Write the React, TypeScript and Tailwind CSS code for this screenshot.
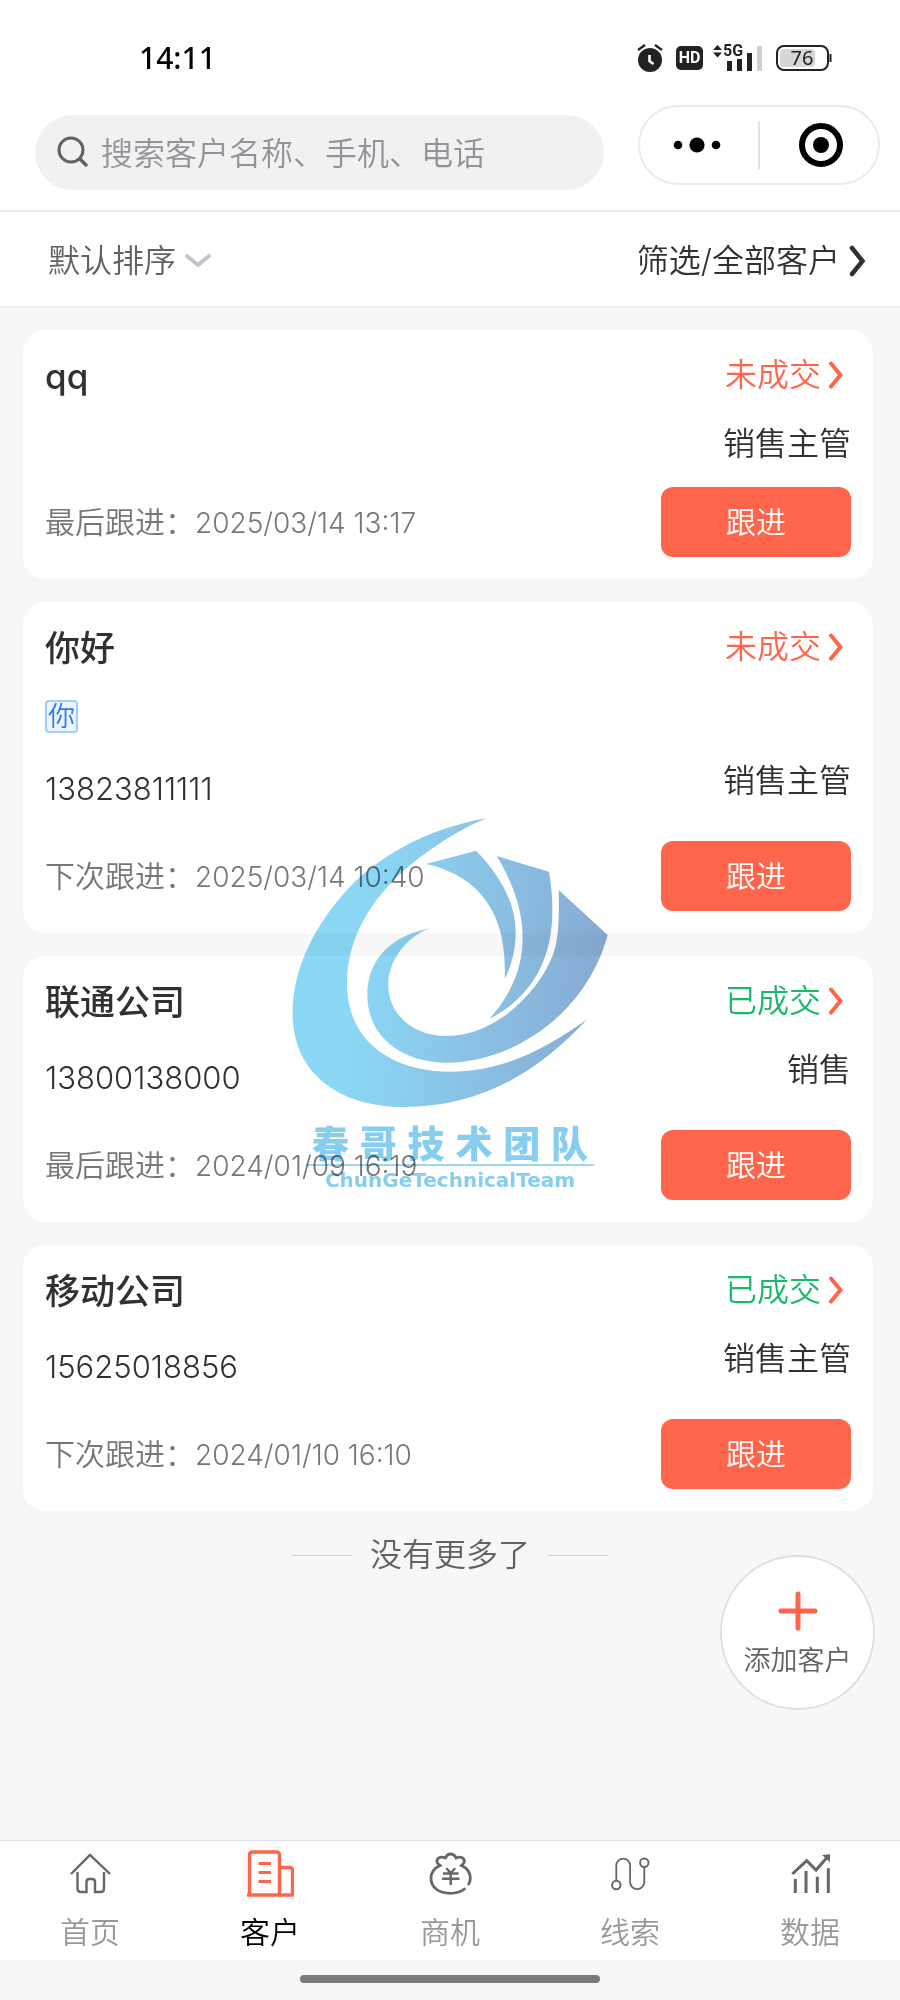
import { type ReactNode, useId, useState } from 'react'

type Customer = {
  name: string
  tag?: string
  phone?: string
  closed: boolean
  owner: string
  followLabel: string
  followTime: string
}

const customers: Customer[] = [
  {
    name: 'qq',
    closed: false,
    owner: '销售主管',
    followLabel: '最后跟进：',
    followTime: '2025/03/14 13:17',
  },
  {
    name: '你好',
    tag: '你',
    phone: '13823811111',
    closed: false,
    owner: '销售主管',
    followLabel: '下次跟进：',
    followTime: '2025/03/14 10:40',
  },
  {
    name: '联通公司',
    phone: '13800138000',
    closed: true,
    owner: '销售',
    followLabel: '最后跟进：',
    followTime: '2024/01/09 16:19',
  },
  {
    name: '移动公司',
    phone: '15625018856',
    closed: true,
    owner: '销售主管',
    followLabel: '下次跟进：',
    followTime: '2024/01/10 16:10',
  },
]

export default function App() {
  return (
    <div className="relative flex min-h-screen flex-col bg-[#f7f7f7] font-['Inter','Noto_Sans_CJK_SC',sans-serif] text-[32px] font-[350] text-[#303133]">
      <header className="border-b-2 border-[#ebebeb] bg-white">
        <StatusBar />
        <SearchRow />
      </header>
      <FilterBar />

      <main className="relative flex flex-1 flex-col pt-[22px]">
        <ul className="flex flex-col gap-[23px] pr-[27px] pl-[23px]">
          {customers.map((customer) => (
            <CustomerCard key={customer.name} customer={customer} />
          ))}
        </ul>
        <div className="mt-5 flex items-center justify-center gap-[18px] leading-[48px] text-[#606266]">
          <span className="h-px w-[60px] bg-[#d0d0d0]" />
          没有更多了
          <span className="h-px w-[60px] bg-[#d0d0d0]" />
        </div>
        <button
          type="button"
          className="absolute right-[25px] bottom-[130px] flex size-[155px] flex-col items-center justify-center gap-[10px] rounded-full border-2 border-[#dcdfe6] bg-white text-[27px] text-[#606266]"
        >
          <svg viewBox="0 0 40 40" className="mt-1.5 size-10" aria-hidden="true">
            <path d="M20 3v34M3 20h34" fill="none" stroke="#ff654a" strokeWidth="5" strokeLinecap="round" />
          </svg>
          <span className="leading-10">添加客户</span>
        </button>
      </main>

      <TabBar />
      <div className="flex h-10 items-center justify-center pb-0.5">
        <span className="h-2 w-[300px] rounded-full bg-[#7b7b7b]" />
      </div>

      <Watermark />
    </div>
  )
}

function StatusBar() {
  return (
    <div className="flex h-[105px] items-center justify-between pt-[10px] pr-[68px] pl-[139px]">
      <span className="font-['Noto_Sans',sans-serif] text-[30px] font-medium text-black">14:11</span>
      <div className="flex items-center">
        <svg viewBox="0 0 28 30" className="h-[30px] w-7" aria-label="闹钟">
          <circle cx="14" cy="17" r="12" fill="#222" />
          <path d="M2 7l7-5M26 7l-7-5" stroke="#222" strokeWidth="2.4" fill="none" />
          <path d="M13.5 12v6l4 3" stroke="#fff" strokeWidth="2.6" fill="none" />
        </svg>
        <span className="ml-3 flex h-6 w-[27px] items-center justify-center rounded-[5px] bg-[#222] font-['Roboto',sans-serif] text-[16px] font-bold text-white">
          HD
        </span>
        <svg viewBox="0 0 52 34" className="ml-[9px] h-[34px] w-[52px]" aria-label="5G 信号">
          <path d="M1 9l4.500-5 4.500 5zM1 11.500l4.500 5 4.500-5z" fill="#222" />
          <text x="11" y="15" fontFamily="Roboto, sans-serif" fontSize="16" fontWeight="700" fill="#222">
            5G
          </text>
          <path d="M15 20h5v10h-5zM25 18h5v12h-5zM35 12h5v18h-5z" fill="#222" />
          <path d="M45 5h5v25h-5z" fill="#d0d0d0" />
        </svg>
        <svg viewBox="0 0 56 26" className="ml-3 h-[26px] w-14" aria-label="电量 76">
          <rect x="1" y="1" width="51" height="24" rx="7" fill="#fff" stroke="#222" strokeWidth="2" />
          <rect x="4" y="4" width="35" height="18" rx="4" fill="#d6d6d6" />
          <path d="M54.500 9v8" stroke="#222" strokeWidth="2" />
          <text x="26" y="20" textAnchor="middle" fontFamily="Noto Sans, sans-serif" fontSize="20" fontWeight="400" fill="#222">
            76
          </text>
        </svg>
      </div>
    </div>
  )
}

function SearchRow() {
  const inputId = useId()
  const [keyword, setKeyword] = useState('')

  return (
    <div className="flex items-start gap-[34px] pr-5 pb-5 pl-[35px]">
      <form
        onSubmit={(e) => e.preventDefault()}
        className="mt-[10px] flex h-[75px] min-w-0 flex-1 items-center rounded-full bg-[#f1f1f1] pl-5"
      >
        <label htmlFor={inputId} aria-label="搜索客户">
          <svg viewBox="0 0 34 34" className="size-[34px]" aria-hidden="true">
            <circle cx="16" cy="14" r="12" fill="none" stroke="#606266" strokeWidth="3" />
            <path d="M25 23l6 6" stroke="#606266" strokeWidth="3.500" strokeLinecap="round" />
          </svg>
        </label>
        <input
          id={inputId}
          type="text"
          value={keyword}
          onChange={(e) => setKeyword(e.target.value)}
          placeholder="搜索客户名称、手机、电话"
          className="ml-3 min-w-0 flex-1 bg-transparent pt-0.5 placeholder:text-[#909399] focus:outline-none"
        />
      </form>
      <div className="flex h-20 w-[242px] items-center rounded-full border-2 border-[#ebebeb]">
        <button type="button" aria-label="更多" className="flex flex-1 justify-center pr-1">
          <svg viewBox="0 0 48 16" className="h-4 w-12" aria-hidden="true">
            <circle cx="5" cy="8" r="4.300" />
            <circle cx="24" cy="8" r="7.600" />
            <circle cx="43" cy="8" r="4.300" />
          </svg>
        </button>
        <span className="h-12 w-0.5 bg-[#e2e2e2]" />
        <button type="button" aria-label="关闭" className="flex flex-1 justify-center pl-1">
          <svg viewBox="0 0 44 44" className="size-11" aria-hidden="true">
            <circle cx="22" cy="22" r="19" fill="none" stroke="#000" strokeWidth="6" />
            <circle cx="22" cy="22" r="8" />
          </svg>
        </button>
      </div>
    </div>
  )
}

function FilterBar() {
  return (
    <div className="flex h-[96px] items-center justify-between border-b-2 border-[#ebecf0] bg-white pt-1 pr-[34px] pl-12">
      <button type="button" className="flex items-center gap-2 text-[#606266]">
        默认排序
        <svg viewBox="0 0 28 16" className="h-4 w-7" aria-hidden="true">
          <path d="M3 3l11 9 11-9" fill="none" stroke="#c0c4cc" strokeWidth="4" strokeLinecap="round" />
        </svg>
      </button>
      <button type="button" className="flex items-center gap-2">
        筛选/全部客户
        <svg viewBox="0 0 18 32" className="h-8 w-[18px]" aria-hidden="true">
          <path d="M4 3l10.500 13L4 29" fill="none" stroke="#303133" strokeWidth="4.500" strokeLinecap="round" />
        </svg>
      </button>
    </div>
  )
}

function CustomerCard({ customer }: { customer: Customer }) {
  const { name, tag, phone, closed, owner, followLabel, followTime } = customer

  return (
    <li className="rounded-[22px] bg-white px-[22px] pb-[22px]">
      <div className="flex h-[90px] items-center justify-between pt-0.5">
        <h2 className="text-[35px] font-medium">{name}</h2>
        <a
          href="#detail"
          className={`flex items-center gap-2 pr-2 pb-0.5 ${closed ? 'text-[#19b96b]' : 'text-[#ff654a]'}`}
        >
          {closed ? '已成交' : '未成交'}
          <svg viewBox="0 0 14 28" className="h-7 w-3.5" aria-hidden="true">
            <path d="M2 2.500L11.500 14 2 25.500" fill="none" stroke="#ff654a" strokeWidth="4" strokeLinecap="round" />
          </svg>
        </a>
      </div>
      {tag && (
        <div className="flex h-[65px] items-start pt-2">
          <span className="flex size-[33px] items-center justify-center rounded border-2 border-[#a0cfff] bg-[#ecf5ff] text-[27px] leading-none text-[#2b7bf3]">
            {tag}
          </span>
        </div>
      )}
      <div className="flex items-start justify-between leading-[48px]">
        {phone ? <span className="pt-2 pb-7 text-[31px]">{phone}</span> : <span />}
        <span className="pb-[19px]">{owner}</span>
      </div>
      <div className="flex items-center justify-between">
        <p className="text-[30px] text-[#777]">
          {followLabel}
          <span className="text-[28px]">{followTime}</span>
        </p>
        <button type="button" className="h-[70px] w-[190px] rounded-xl bg-[#ff654a] text-[30px] text-white">
          跟进
        </button>
      </div>
    </li>
  )
}

function TabBar() {
  return (
    <nav className="grid h-[120px] grid-cols-5 border-t border-[#e0e1ec] bg-white">
      <Tab label="首页">
        <path d="M5 25L24 6l20 19M11.500 23v16.500q0 3.500 3.500 3.500h5.500V33q0-3 3-3h2.500q3 0 3 3v10h5.500q3.500 0 3.500-3.500V23" strokeWidth="2.400" />
      </Tab>
      <Tab label="客户" active>
        <path d="M3.500 46V6q0-3 3-3h24q3 0 3 3v40M33.500 18.500h10q3 0 3 3V46M1 46h47" strokeWidth="3.400" />
        <path d="M12.500 14.500h12.500M12.500 23.500h12.500M12.500 32.500h12.500" strokeWidth="3.200" />
      </Tab>
      <Tab label="商机">
        <path
          d="M38.500 40C34.500 43 30 44.300 24.500 44.300 13 44.300 5 38.500 5 29.300 5 23 8.500 19 14 16.500 10.500 14 10 11.500 12 9.500 14 7.500 17 8 19.500 9 20.500 6.500 22 5 24.600 5S29 6.500 30 9C32.500 8 35.500 7.500 37.300 9.500 39.200 11.500 38.500 14 35.500 16.500 41 19 44.300 23.500 44.300 29.300Q44.300 32.500 42.700 35"
          strokeWidth="2.800"
          strokeLinecap="round"
        />
        <path d="M21 20l3.700 4 3.800-4M18 24.500h13.500M17 29.700h15.500M24.700 24v11" strokeWidth="2.500" strokeLinecap="round" />
      </Tab>
      <Tab label="线索">
        <circle cx="10.300" cy="36" r="4.200" strokeWidth="2" />
        <circle cx="38.300" cy="13.700" r="4.200" strokeWidth="2" />
        <path d="M10.300 31.500V16.500a6.900 6.900 0 0 1 13.800 0V33a7.100 7.100 0 0 0 14.200 0V18" strokeWidth="1.800" />
      </Tab>
      <Tab label="数据">
        <path d="M6.300 25L20.700 11.700 30 21 41 8.500M9.300 30v14M20 22v22M31.300 27.700V44M42.300 19.300V44" strokeWidth="3" />
        <path d="M36 6l8-.7v8z" fill="#666" stroke="none" />
      </Tab>
    </nav>
  )
}

function Tab({ label, active, children }: { label: string; active?: boolean; children: ReactNode }) {
  return (
    <a href="#tab" className="flex flex-col items-center gap-3 pt-2 text-[30px]">
      <svg
        viewBox="0 0 48 48"
        className="size-12"
        fill="none"
        stroke={active ? '#ff654a' : '#666'}
        aria-hidden="true"
      >
        {children}
      </svg>
      <span className={active ? 'leading-[46px] text-black' : 'leading-[46px] text-[#999]'}>{label}</span>
    </a>
  )
}

function Watermark() {
  return (
    <div className="pointer-events-none absolute top-[800px] left-1/2 flex w-[360px] -translate-x-1/2 flex-col items-center font-['Noto_Sans_CJK_SC',sans-serif] text-[#87cdf0] mix-blend-multiply">
      <svg viewBox="0 0 1080 960" className="h-[320px] w-full" aria-hidden="true">
        <defs>
          <linearGradient id="swirl" gradientUnits="userSpaceOnUse" x1="68" y1="480" x2="1013" y2="580">
            <stop offset="0.200" stopColor="#8bd7f6" />
            <stop offset="0.500" stopColor="#8ac7e9" />
            <stop offset="1" stopColor="#88a9d1" />
          </linearGradient>
        </defs>
        <g fill="url(#swirl)">
          <path d="M650 55C470 85 310 175 215 288 120 400 68 520 68 640 68 830 220 921 400 921 620 921 790 830 952 658 830 745 700 815 540 815 360 815 231 720 231 550 231 400 320 270 450 172 510 128 580 82 650 55Z" />
          <path d="M480 385C350 410 292 490 292 585 292 710 395 788 530 788 730 788 950 640 1013 405L866 270C870 420 855 460 830 505 785 590 670 708 530 708 425 708 355 640 355 555 355 480 410 410 480 385Z" />
          <path d="M468 192L618 152C700 235 738 320 737 400 736 460 722 500 704 537 712 380 660 235 468 192Z" />
          <path d="M680 168L837 215C865 380 845 560 658 657 790 510 785 340 680 168Z" />
        </g>
      </svg>
      <div className="flex w-[276px] justify-between text-[37px] leading-[44px] font-black">
        {[...'春哥技术团队'].map((char) => (
          <span key={char}>{char}</span>
        ))}
      </div>
      <span className="h-0.5 w-[288px] bg-[#9bd8f5]" />
      <span className="font-['DejaVu_Sans',sans-serif] text-[20px] leading-7 font-bold">ChunGeTechnicalTeam</span>
    </div>
  )
}
